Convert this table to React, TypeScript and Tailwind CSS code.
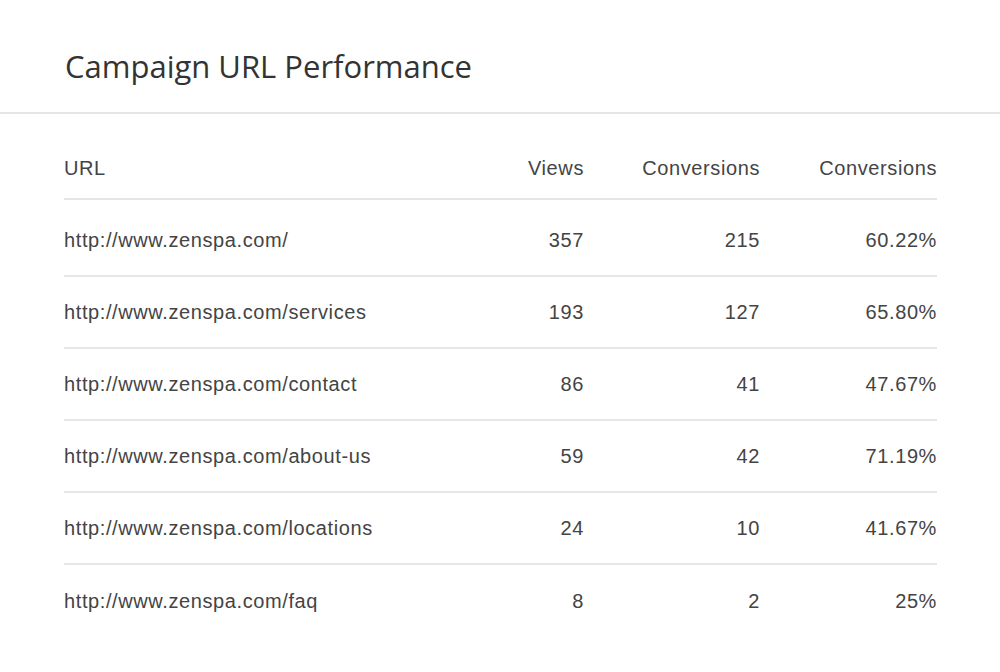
const rows = [
  { url: "http://www.zenspa.com/", views: "357", conversions: "215", rate: "60.22%" },
  { url: "http://www.zenspa.com/services", views: "193", conversions: "127", rate: "65.80%" },
  { url: "http://www.zenspa.com/contact", views: "86", conversions: "41", rate: "47.67%" },
  { url: "http://www.zenspa.com/about-us", views: "59", conversions: "42", rate: "71.19%" },
  { url: "http://www.zenspa.com/locations", views: "24", conversions: "10", rate: "41.67%" },
  { url: "http://www.zenspa.com/faq", views: "8", conversions: "2", rate: "25%" },
];

const rowHeights = ["h-[77px] pt-[5px]", "h-[72px]", "h-[72px]", "h-[72px]", "h-[72px]", "h-[72px]"];

export default function App() {
  return (
    <div className="min-h-[672px] w-[1000px] bg-white">
      <div className="flex h-[114px] items-center border-b-2 border-[#e6e6e6] pt-[20px] pl-[65px]">
        <h1 className="font-['Open_Sans',sans-serif] text-[31px] leading-none text-[#333]">
          Campaign URL Performance
        </h1>
      </div>

      <div className="pl-[64px] pr-[63px] font-['Liberation_Sans',Arial,sans-serif] text-[20px] leading-[24px] tracking-[0.6px] text-[#444]">
        <div className="flex h-[86px] items-start border-b-2 border-[#e6e6e6] pt-[42px]">
          <div className="flex-1">URL</div>
          <div className="w-[176px] text-right">Views</div>
          <div className="w-[176px] text-right">Conversions</div>
          <div className="w-[177px] text-right">Conversions</div>
        </div>
        {rows.map((row, i) => (
          <div
            key={row.url}
            className={`flex items-center ${rowHeights[i]} ${
              i < rows.length - 1 ? "border-b-2 border-[#e6e6e6]" : ""
            }`}
          >
            <div className="flex-1">{row.url}</div>
            <div className="w-[176px] text-right">{row.views}</div>
            <div className="w-[176px] text-right">{row.conversions}</div>
            <div className="w-[177px] text-right">{row.rate}</div>
          </div>
        ))}
      </div>
    </div>
  );
}
